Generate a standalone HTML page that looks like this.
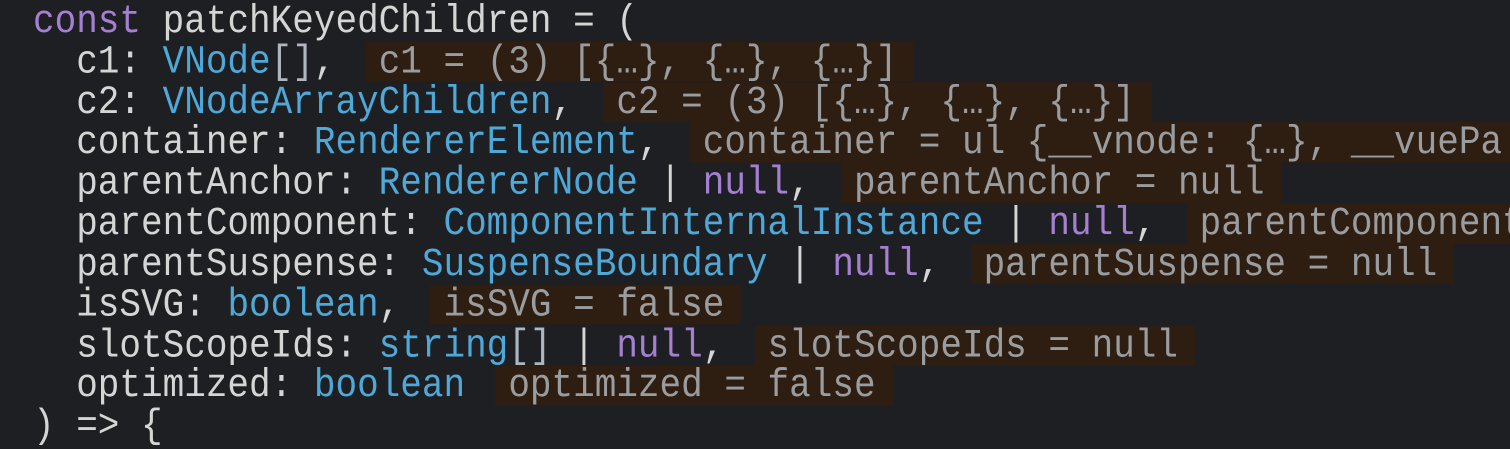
<!DOCTYPE html>
<html><head><meta charset="utf-8"><style>
html,body{margin:0;padding:0;background:#1e1f22;width:1510px;height:437px;overflow:hidden}
.c{position:absolute;left:33px;top:1px;font-family:"Liberation Mono","DejaVu Sans Mono",monospace;font-size:36px;color:#d5d5d5;transform:scaleY(1.1);transform-origin:0 0}
.l{height:36.82px;line-height:37.4px;white-space:pre}
.k{color:#a57fd2}.t{color:#4ea8d8}.p{color:#aeb6bf}
.h{display:inline-block;vertical-align:top;height:36.6px;background:#2e1d11;color:#9a9da0;margin-left:-13px;padding:0 17px 0 13px}
</style></head><body><div class="c"><div class="l"><span class="k">const</span> patchKeyedChildren = (</div><div class="l">  c1: <span class="t">VNode</span><span class="p">[]</span>,  <span class="h">c1 = (3) [{…}, {…}, {…}]</span></div><div class="l">  c2: <span class="t">VNodeArrayChildren</span>,  <span class="h">c2 = (3) [{…}, {…}, {…}]</span></div><div class="l">  container: <span class="t">RendererElement</span>,  <span class="h">container = ul {__vnode: {…}, __vuePa</span></div><div class="l">  parentAnchor: <span class="t">RendererNode</span> | <span class="k">null</span>,  <span class="h">parentAnchor = null</span></div><div class="l">  parentComponent: <span class="t">ComponentInternalInstance</span> | <span class="k">null</span>,  <span class="h">parentComponent</span></div><div class="l">  parentSuspense: <span class="t">SuspenseBoundary</span> | <span class="k">null</span>,  <span class="h">parentSuspense = null</span></div><div class="l">  isSVG: <span class="t">boolean</span>,  <span class="h">isSVG = false</span></div><div class="l">  slotScopeIds: <span class="t">string</span><span class="p">[]</span> | <span class="k">null</span>,  <span class="h">slotScopeIds = null</span></div><div class="l">  optimized: <span class="t">boolean</span>  <span class="h">optimized = false</span></div><div class="l">) =&gt; {</div></div></body></html>
